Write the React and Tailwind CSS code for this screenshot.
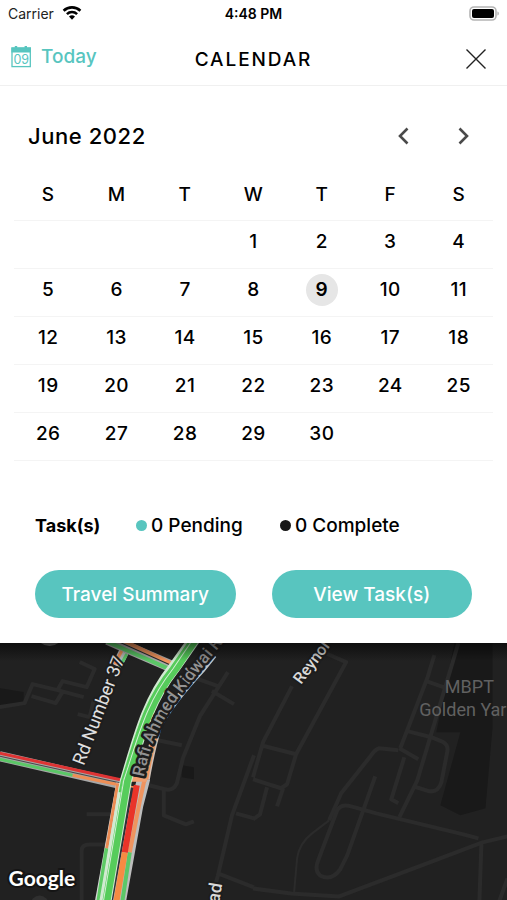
import React from "react";

const WEEKDAYS = ["Sunday", "Monday", "Tuesday", "Wednesday", "Thursday", "Friday", "Saturday"];
const WEEKS = [
  [null, null, null, 1, 2, 3, 4],
  [5, 6, 7, 8, 9, 10, 11],
  [12, 13, 14, 15, 16, 17, 18],
  [19, 20, 21, 22, 23, 24, 25],
  [26, 27, 28, 29, 30, null, null],
];
const TODAY = 9;

function StatusBar() {
  return (
    <div className="grid h-7 grid-cols-3 items-center px-2 text-sm text-[#222]">
      <div className="flex items-center gap-2">
        <span>Carrier</span>
        <svg width="20" height="16" viewBox="0 0 20 16" aria-hidden="true">
          <g fill="none" stroke="#000" strokeWidth="2.6">
            <path d="M1.6 4.7A12.2 12.2 0 0 1 18.4 4.7" />
            <path d="M4.9 8.1A7.4 7.4 0 0 1 15.1 8.1" />
          </g>
          <path d="M7 10.6a4.4 4.4 0 0 1 6 0L10 13.8z" fill="#000" />
        </svg>
      </div>
      <span className="text-center font-semibold text-black">4:48 PM</span>
      <svg className="justify-self-end" width="30" height="16" viewBox="0 0 30 16" aria-hidden="true">
        <rect x="1" y="1" width="26" height="13" rx="4" fill="#fff" stroke="#b4b4b4" strokeWidth="1.6" />
        <rect x="3" y="3" width="22" height="9" rx="2" fill="#000" />
        <path d="M28.4 5.500v4c2-.6 2-3.4 0-4z" fill="#b4b4b4" />
      </svg>
    </div>
  );
}

function Header() {
  return (
    <header className="grid h-[58px] grid-cols-3 items-center border-b border-[#f0f0f0] px-2">
      <button type="button" className="flex items-center gap-[7px] justify-self-start text-[19px] leading-7 font-medium text-[#58c5bf]">
        <svg width="26" height="24" viewBox="0 0 26 24" aria-hidden="true">
          <path d="M3.4 2.4h19.6v5.2H3.4zM6.8 1h2.4v4H6.8zM16.6 1h2.4v4h-2.4z" fill="#58c5bf" />
          <rect x="4" y="3" width="18.3" height="18.6" fill="none" stroke="#58c5bf" strokeWidth="1.3" />
          <text x="13.2" y="19" textAnchor="middle" fontSize="12.5" fontWeight="400" fill="#58c5bf">09</text>
        </svg>
        Today
      </button>
      <h1 className="pt-1.5 text-center text-[19px] leading-7 font-medium tracking-widest text-black">CALENDAR</h1>
      <button type="button" aria-label="Close" className="justify-self-end pt-1">
        <svg width="40" height="24" viewBox="0 0 40 24" aria-hidden="true">
          <path d="M7.5 2.5l19 19M26.500 2.500l-19 19" stroke="#222" strokeWidth="1.4" />
        </svg>
      </button>
    </header>
  );
}

function Month() {
  return (
    <section className="px-[14px] pt-[30px]">
      <div className="flex h-10 items-center justify-between pr-[18px] pl-[14px]">
        <h2 className="text-[22px] font-medium tracking-wide text-black">June 2022</h2>
        <div className="flex gap-9">
          <button type="button" aria-label="Previous month" className="flex w-6 justify-center">
            <svg width="14" height="20" viewBox="0 0 14 20" aria-hidden="true">
              <path d="M11.500 2.5L4 10l7.5 7.5" fill="none" stroke="#4a4a4a" strokeWidth="2.6" />
            </svg>
          </button>
          <button type="button" aria-label="Next month" className="flex w-6 justify-center">
            <svg width="14" height="20" viewBox="0 0 14 20" aria-hidden="true">
              <path d="M3.500 2.5l7.5 7.5-7.5 7.5" fill="none" stroke="#4a4a4a" strokeWidth="2.6" />
            </svg>
          </button>
        </div>
      </div>
      <table className="mt-[14px] w-full table-fixed border-collapse text-[19px] font-medium tracking-wide text-black">
        <thead>
          <tr className="h-[50px] border-b border-[#f4f4f4]">
            {WEEKDAYS.map((day) => (
              <th key={day} scope="col" abbr={day} className="p-0 font-medium">{day[0]}</th>
            ))}
          </tr>
        </thead>
        <tbody>
          {WEEKS.map((week, w) => (
            <tr key={w} className="h-12 border-b border-[#f4f4f4]">
              {week.map((date, d) => (
                <td key={d} className="px-0 pt-0 pb-1 text-center">
                  {date && (
                    <button
                      type="button"
                      aria-current={date === TODAY ? "date" : undefined}
                      className={
                        date === TODAY
                          ? "mx-auto flex size-8 items-center justify-center rounded-full bg-[#e6e6e6] font-semibold"
                          : "mx-auto flex size-8 items-center justify-center"
                      }
                    >
                      {date}
                    </button>
                  )}
                </td>
              ))}
            </tr>
          ))}
        </tbody>
      </table>
    </section>
  );
}

function Tasks() {
  return (
    <section className="px-[35px] pt-[51px] pb-[25px]">
      <div className="flex h-7 items-center text-[19px] leading-7 font-medium text-black">
        <h3 className="w-[101px] text-lg font-bold">Task(s)</h3>
        <p className="flex w-36 items-center gap-1">
          <span className="size-[11px] rounded-full bg-[#58c5bf]" />0 Pending
        </p>
        <p className="flex items-center gap-1">
          <span className="size-[11px] rounded-full bg-[#181818]" />0 Complete
        </p>
      </div>
      <div className="mt-[30px] grid grid-cols-2 gap-9 text-[19px] leading-7 font-medium text-white">
        <button type="button" className="h-12 rounded-full bg-[#58c5bf] pt-0.5">Travel Summary</button>
        <button type="button" className="h-12 rounded-full bg-[#58c5bf] pt-0.5">View Task(s)</button>
      </div>
    </section>
  );
}

function TrafficMap() {
  return (
    <svg className="block min-h-[257px] w-full flex-1 bg-[#212121]" viewBox="0 643 507 257" preserveAspectRatio="xMidYMin slice" role="img" aria-label="Traffic map">
      <defs>
        <linearGradient id="edge" x1="0" y1="0" x2="0" y2="1">
          <stop offset="0" stopColor="#000" stopOpacity="0.55" />
          <stop offset="1" stopColor="#000" stopOpacity="0" />
        </linearGradient>
        <path id="rafi" d="M144 777C149 752 157 727 177 700C189 684 200 670 232 632" />
      </defs>
      <rect x="0" y="643" width="507" height="257" fill="#212121" />

      <g fill="#191919">
        <path d="M454 643h38v85l-7 80-25 7-20-10 20-73h-24z" />
        <path d="M0 688l24 4v13l-24 2zM182 765l12 2v12l-12-2z" />
      </g>
      <circle cx="50" cy="632" r="14" fill="#6d6d6d" />
      <circle cx="40" cy="904" r="9" fill="#2f2f2f" />

      <g fill="none" stroke="#2b2b2b" strokeWidth="4" strokeLinejoin="round">
        <path d="M80 662l15 7-8 18-24-6-5 9 26 7M58 690l-25-6-8 19-25 4M32 696l24 7 8-13M78 714l12 3 4-17" />
        <path d="M228 672L200 716l-17 42-6 25q-4 8-12 6l-20-5M190 676l28 10M212 691l22 13M158 740l24 5M164 790v25l22 9 8-3" />
        <path d="M87 814h36M82 900v-50q0-6 8-6h20" />
        <path d="M254 755l-22 60-14 60-5 18M236 813l18 5M218 873l36 14" />
        <path d="M292 686L263 742l-10 35M325 653l21 9-50 92-35-9M296 754l-9 30-6 4-28-9M267 787l-7 27-7 5M283 788l-6 18" />
        <path d="M434 655l-7 23-27 70M458 643l-20 67-21 70-18 37M426 681l17 6M407 731l24 6 12 5q5 3 4 9l-6 31q-3 10-12 9l-16-5" />
        <path d="M399 748l19 11M404 757l-13 42 7 4" />
        <path d="M398 750l-19-2q-4 1-8 7l-30 38-12 27" />
        <path d="M329 820l-17 13q-13 10-15 25l-3 34" strokeWidth="2" />
        <path d="M375 776l-12 34-16 45-7 14q-9 12-20 6-6-5-2-15l19-50q4-7 14-4l25 7 87 21 15 4M253 888l38 5 48 3 85-32 58-22 25-6M481 842l-2 58M507 878l-8 22" />
      </g>

      <g fill="none">
        <path d="M0 756L122 784" stroke="#a7a7a7" strokeWidth="10" />
        <path d="M0 753L123 780" stroke="#de3434" strokeWidth="3" />
        <path d="M0 759L73 775" stroke="#5bc767" strokeWidth="3" />
        <path d="M73 775L136 788" stroke="#ee8e55" strokeWidth="3" />
        <path d="M0 756L122 783" stroke="#484848" strokeWidth="1" />

        <path d="M108 639L175 668" stroke="#aaa" strokeWidth="12" />
        <path d="M106 641L172 670" stroke="#5bc767" strokeWidth="4" />
        <path d="M124 641L177 666" stroke="#f0935d" strokeWidth="4" />
        <path d="M115 640L175 667" stroke="#292929" strokeWidth="1" />
        <path d="M124 652L117 666" stroke="#bbb" strokeWidth="10" />
        <path d="M122 651L115 664" stroke="#ee8e55" strokeWidth="3" />
        <path d="M127 654L120 667" stroke="#5bc767" strokeWidth="3" />

        <path d="M130 787L111 900" stroke="#30343a" strokeWidth="10" />
        <path d="M144 778L137 805L119 905" stroke="#bdbdbd" strokeWidth="13" />
        <path d="M145 778L140 801L130 852" stroke="#ef945f" strokeWidth="4" />
        <path d="M130 852L122 905" stroke="#5bc767" strokeWidth="4" />
        <path d="M137 785L125 852" stroke="#e93429" strokeWidth="6" />
        <path d="M125 852L116 905" stroke="#f68b43" strokeWidth="6" />
        <path d="M130 779h17" stroke="#f0a070" strokeWidth="5" />

        <path d="M121 783L99 905" stroke="#d6d6d6" strokeWidth="9" />
        <path d="M118 783L107 848" stroke="#ec8c54" strokeWidth="3" />
        <path d="M107 848L98 905" stroke="#5ecb65" strokeWidth="4" />
        <path d="M196 637L174 668C148 701 140 734 126 781L105 905" stroke="#d1ead1" strokeWidth="12" />
        <path d="M197 637L176 668C149 701 141 734 127 781L106 905" stroke="#56cc5b" strokeWidth="8" />
        <path d="M192 638L171 668C144 701 137 734 122 781L120 792" stroke="#56cc5b" strokeWidth="2" />
        <path d="M194 638L173 669C146 703 139 735 124 780L103 905" stroke="#d4efd5" strokeWidth="1" />
        <path d="M158 727C153 743 149 762 146 779" stroke="#d0c0b5" strokeWidth="8" />
        <path d="M158 727C153 743 149 762 146 779" stroke="#ef945f" strokeWidth="5" />
        <path d="M214 655L202 670Q173 701 158 728" stroke="#c6c6c6" strokeWidth="6" />
      </g>

      <g fontFamily="Roboto, 'Liberation Sans', sans-serif" fontSize="18" paintOrder="stroke" strokeLinejoin="round">
        <text fill="#929292" stroke="#1d1d1d" strokeWidth="5" fontSize="17" fontWeight="500">
          <textPath href="#rafi">Rafi Ahmed Kidwai R</textPath>
        </text>
        <text transform="translate(84 766) rotate(-69)" fill="#e1e1e1" stroke="#1d1d1d" strokeWidth="4" fontSize="18">Rd Number 37</text>
        <text transform="translate(301 685) rotate(-53)" fill="#d8d8d8" stroke="#1d1d1d" strokeWidth="4" fontSize="16" fontWeight="500">Reynol</text>
        <text transform="translate(219 903) rotate(-80)" fill="#d8d8d8" stroke="#1d1d1d" strokeWidth="4" fontWeight="500">ad</text>
        <text x="469" y="693" textAnchor="middle" fill="#616161">MBPT</text>
        <text x="419" y="716" fill="#616161">Golden Yar</text>
      </g>
      <text x="9" y="886" fontFamily="Lato, sans-serif" fontSize="21" fontWeight="700" fill="#fff" stroke="#151515" strokeWidth="4" paintOrder="stroke">Google</text>
      <rect x="0" y="643" width="507" height="18" fill="url(#edge)" />
    </svg>
  );
}

export default function App() {
  return (
    <main className="flex min-h-screen flex-col overflow-hidden bg-white font-['Inter','Liberation_Sans',sans-serif]">
      <StatusBar />
      <Header />
      <Month />
      <Tasks />
      <TrafficMap />
    </main>
  );
}
